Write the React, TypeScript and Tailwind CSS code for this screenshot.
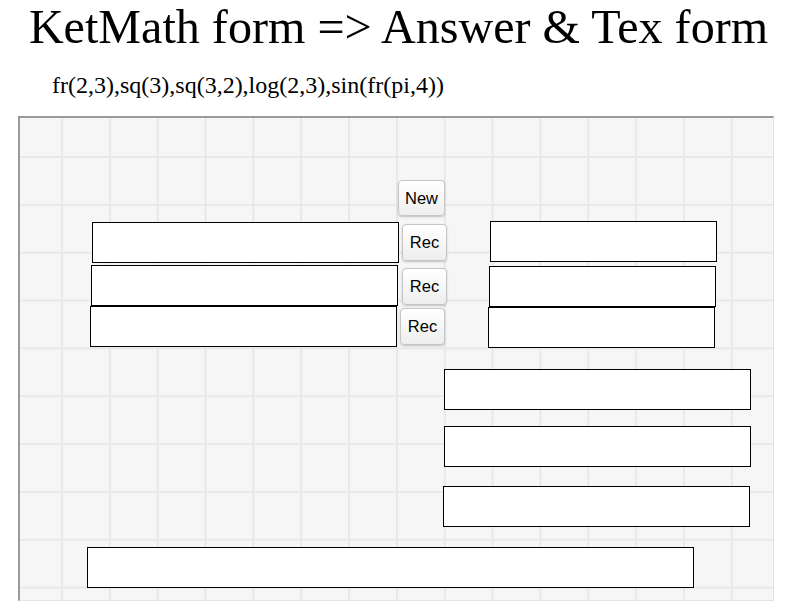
import React from 'react'

type Box = { x: number; y: number; w: number; h: number }

// positions inside the grid canvas (padding box origin)
const leftInputs: Box[] = [
  { x: 72, y: 104, w: 307, h: 41 },
  { x: 71, y: 147, w: 307, h: 41 },
  { x: 70, y: 188, w: 307, h: 41 },
]
const rightInputs: Box[] = [
  { x: 470, y: 103, w: 227, h: 41 },
  { x: 469, y: 148, w: 227, h: 41 },
  { x: 468, y: 189, w: 227, h: 41 },
]
const answerInputs: Box[] = [
  { x: 424, y: 251, w: 307, h: 41 },
  { x: 424, y: 308, w: 307, h: 41 },
  { x: 423, y: 368, w: 307, h: 41 },
  { x: 67, y: 429, w: 607, h: 41 },
]
const recButtons: Box[] = [
  { x: 382, y: 106, w: 45, h: 37 },
  { x: 382, y: 150, w: 45, h: 37 },
  { x: 380, y: 190, w: 45, h: 37 },
]

function Field({ b }: { b: Box }) {
  return (
    <input
      className="absolute bg-white border border-black outline-none"
      style={{ left: b.x, top: b.y, width: b.w, height: b.h }}
    />
  )
}

function Btn({ b, label }: { b: Box; label: string }) {
  return (
    <button
      className="absolute flex items-center justify-center rounded-[4px] border border-[#c6c6c6] bg-[linear-gradient(#ffffff,#eeeeee)] shadow-[0_1px_2px_rgba(0,0,0,0.22)] text-[16.5px] text-black font-['Liberation_Sans',Arial,sans-serif]"
      style={{ left: b.x, top: b.y, width: b.w, height: b.h }}
    >
      {label}
    </button>
  )
}

export default function App() {
  return (
    <div className="w-[792px] h-[612px] bg-white overflow-hidden font-['Liberation_Serif','Times_New_Roman',serif] text-black">
      <h1 className="text-center pl-[5px] text-[48.1px] leading-[53px] font-normal">KetMath form =&gt; Answer &amp; Tex form</h1>
      <p className="mt-[18px] ml-[52px] text-[24px] leading-[28px]">fr(2,3),sq(3),sq(3,2),log(2,3),sin(fr(pi,4))</p>
      <div className="relative mt-[17px] ml-[18px] w-[756px] h-[485px] border-l-2 border-t-2 border-l-[#9a9a9a] border-t-[#9a9a9a] border-r border-b border-r-[#e2e2e2] border-b-[#e2e2e2] bg-[#f6f6f6] bg-[linear-gradient(to_right,#e8e8e8_2px,transparent_2px),linear-gradient(to_bottom,#e8e8e8_2px,transparent_2px)] bg-[size:47.85px_47.85px] bg-[position:41px_38px]">
        <Btn b={{ x: 378, y: 62, w: 47, h: 36 }} label="New" />
        {recButtons.map((b, i) => (
          <Btn key={i} b={b} label="Rec" />
        ))}
        {leftInputs.map((b, i) => (
          <Field key={'l' + i} b={b} />
        ))}
        {rightInputs.map((b, i) => (
          <Field key={'r' + i} b={b} />
        ))}
        {answerInputs.map((b, i) => (
          <Field key={'a' + i} b={b} />
        ))}
      </div>
    </div>
  )
}
